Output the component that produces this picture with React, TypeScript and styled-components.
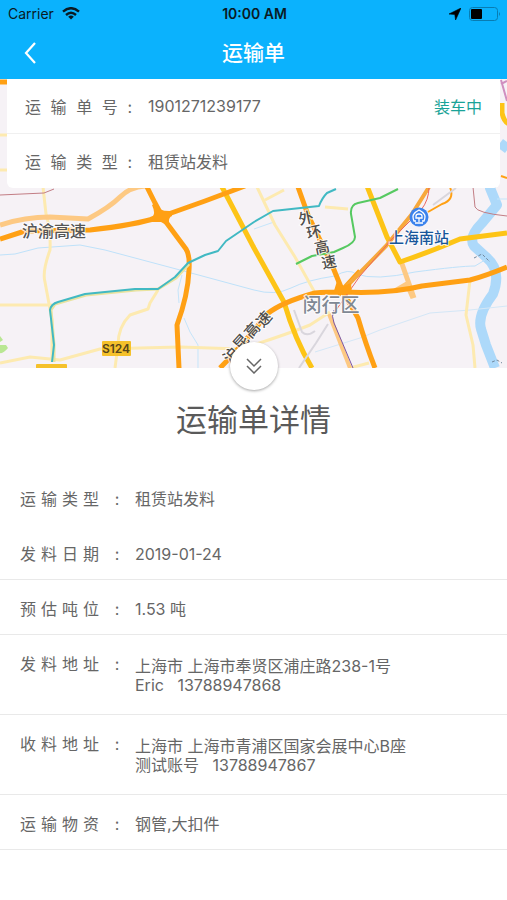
import React from "react";
import styled, { createGlobalStyle } from "styled-components";

const GlobalStyle = createGlobalStyle`
  *, *::before, *::after { box-sizing: border-box; }
  html, body { margin: 0; background: #fff; }
  body {
    font-family: Inter, "Noto Sans CJK SC", sans-serif;
    font-size: 16px;
    color: #666;
  }
`;

const Header = styled.header`
  background: #0bb2fd;
  color: #fff;
`;

const StatusBar = styled.div`
  display: grid;
  grid-template-columns: 1fr auto 1fr;
  align-items: center;
  height: 27px;
  padding: 0 6px 0 8px;
  color: #0a1a24;
  font-size: 14px;
`;

const StatusSide = styled.div<{ $end?: boolean }>`
  display: flex;
  align-items: center;
  gap: 8px;
  justify-content: ${(p) => (p.$end ? "flex-end" : "flex-start")};
`;

const Clock = styled.time`
  font-weight: 600;
`;

const NavBar = styled.div`
  display: grid;
  grid-template-columns: 60px 1fr 60px;
  align-items: center;
  height: 52px;
`;

const BackButton = styled.button`
  display: flex;
  align-items: center;
  height: 44px;
  padding: 0 24px;
  border: 0;
  background: none;
  color: #fff;
`;

const NavTitle = styled.h1`
  margin: 0;
  text-align: center;
  font-size: 21px;
  line-height: 52px;
  font-weight: 500;
`;

const MapArea = styled.section`
  position: relative;
  height: 289px;
  padding: 0 7px;
`;

const MapCanvas = styled.svg`
  position: absolute;
  inset: 0;
  width: 100%;
  height: 100%;
`;

const SummaryCard = styled.dl`
  position: relative;
  margin: 0;
  background: #fff;
  border-radius: 0 0 6px 6px;
`;

const SummaryRow = styled.div`
  display: flex;
  align-items: center;
  box-sizing: content-box;
  height: 54px;
  padding: 0 18px;
  & + & { border-top: 1px solid #f0f0f0; }
`;

const SummaryLabel = styled.dt`
  width: 107px;
  margin-right: 16px;
  text-align-last: justify;
`;

const SummaryValue = styled.dd`
  flex: 1;
  margin: 0;
`;

const State = styled.dd`
  margin: 0;
  color: #1aa398;
`;

const ToggleButton = styled.button`
  position: absolute;
  left: 50%;
  bottom: -22px;
  display: grid;
  place-items: center;
  width: 48px;
  height: 48px;
  margin-left: -24px;
  padding: 0;
  border: 0;
  border-radius: 50%;
  background: #fff;
  color: #666;
  box-shadow: 0 1px 3px rgba(0, 0, 0, 0.35);
`;

const SheetTitle = styled.h2`
  margin: 0;
  padding: 30px 0 28px;
  text-align: center;
  font-size: 31px;
  line-height: 44px;
  font-weight: 400;
  color: #5a5a5a;
`;

const Details = styled.dl`
  margin: 0;
`;

const DetailRow = styled.div<{ $plain?: boolean; $tall?: boolean }>`
  display: flex;
  min-height: 55px;
  padding: ${(p) => (p.$tall ? "20px 20px 19px" : "20px 20px 0")};
  border-bottom: 1px solid ${(p) => (p.$plain ? "transparent" : "#e9e9e9")};
  line-height: 19px;
`;

const DetailLabel = styled.dt`
  width: 79px;
  text-align-last: justify;
`;

const Colon = styled.span`
  width: 36px;
  text-align: center;
`;

const DetailValue = styled.dd<{ $tall?: boolean }>`
  flex: 1;
  margin: ${(p) => (p.$tall ? "2px 0 0" : "0")};
  white-space: pre-wrap;
`;

const orange = "#ffa014";
const yellow = "#fdc416";
const pale = "#fdeab0";
const peach = "#fdc983";

type Road = [string, string, number];

const roads: Road[] = [
  ["#add9fa", "M507 142L501 150M494 180L490 188L497 205L482 223Q468 237 474 246L486 257Q502 270 493 294Q477 315 481 329L486 345L495 368", 10],
  ["#bfe2fa", "M0 255L15 254L38 248L80 245L105 250L180 270L254 290Q275 296 291 288T335 276Q349 268 356 274Q375 281 415 272Q460 266 475 266L485 260", 1],
  ["#c5e5fa", "M182 275L178 290L179 303M184 318L190 332L198 345L198 368M254 229L274 222M497 199H507", 1],
  ["#d4e7f6", "M315 352L360 338L380 330L430 313L470 310L507 306", 1],
  [pale, "M0 135H12M0 170H12M43 187L46 214Q51 230 50 250Q42 272 45 282L52 320V362M0 305H52M0 363L30 357L60 360L100 349L180 347L240 349Q280 337 310 325L330 312", 3],
  [pale, "M158 290L150 303L148 309L130 315Q118 327 118 345L115 368M257 187L275 225L295 257L314 291M265 200L284 190M325 207L348 209M470 280L466 315L473 345L475 368M350 368L369 363", 3],
  [peach, "M0 225Q25 217 50 217L88 219Q110 207 120 197T145 186M395 291L407 284L413 298M401 261L414 298", 5],
  [peach, "M329 314L350 368", 4],
  [yellow, "M221 185L254 248L284 302Q295 340 312 368M367 186L387 237L400 262Q430 252 460 239L507 233M502 103V113Q504 122 509 124", 5],
  [orange, "M0 82H7M0 239L25 231L90 230Q135 225 160 217L205 201L245 186M147 187L155 203L163 218L186 249Q190 255 189 270Q188 295 177 325L179 368", 5],
  [orange, "M220 368Q242 346 267 314Q282 302 315 293Q325 292 343 292Q390 294 422 286L470 280Q485 276 507 267M298 187L308 215L332 265L343 292L358 318Q366 345 375 368M338 295L360 271", 5],
  ["#f7a83b", "M343 290L386 246L412 214L429 187", 4],
  [orange, "M450 187Q455 200 442 204L428 212M501 176L507 178", 2],
  ["#ea655f", "M334 313L360 276L392 239L421 210Q429 200 429 187", 1],
  ["#d9d6dd", "M299 368L316 343L328 324M294 310L302 332Q307 337 315 331M433 205L456 188", 2],
  ["#7b56a5", "M334 310Q331 316 334 323L353 368", 1],
  ["#56c961", "M398 189L380 198L358 203Q350 205 351 214L355 237Q355 243 343 248L334 252L312 256L296 264", 2],
  ["#e9e3a0", "M54 362L54 345L51 310L55 304L86 295L136 290L158 289L176 278L189 264", 3],
  ["#41b9c3", "M52 362L54 345L50 310Q51 304 58 302L85 294L135 289H158L175 277L188 263L205 255L218 251L226 241L254 222L273 211L319 206Q322 198 327 193L336 189", 2],
  ["#c27d84", "M0 195L44 193L54 189M473 187L475 207Q477 213 507 216", 1],
  ["#cf8fc0", "M501 80L507 101M501 84L507 81", 2],
];

type Glyph = [string, number, number, number];
const slantedGlyphs: Glyph[] = [
  ["外", 306, 218, -12],
  ["环", 314, 232, -12],
  ["高", 322, 247, -12],
  ["速", 329, 262, -12],
  ["沪", 231, 355, -48],
  ["昆", 241, 342, -48],
  ["高", 252, 330, -48],
  ["速", 264, 319, -48],
];

const MapLabel = styled.text<{ $size: number; $fill: string; $weight?: number }>`
  font-size: ${(p) => p.$size}px;
  font-weight: ${(p) => p.$weight ?? 500};
  fill: ${(p) => p.$fill};
  stroke: rgba(255, 255, 255, 0.8);
  stroke-width: 2px;
  paint-order: stroke;
  text-anchor: middle;
  dominant-baseline: central;
`;

const ShieldLabel = styled.text`
  font-size: 12px;
  font-weight: 600;
  fill: #57451b;
  text-anchor: middle;
`;

function CityMap() {
  return (
    <MapCanvas viewBox="0 79 507 289" preserveAspectRatio="xMidYMin slice" role="img" aria-label="地图">
      <rect x="0" y="79" width="507" height="289" fill="#f6f2f6" />
      <path d="M0 336L3 340L0 342ZM0 345H6L8 348Q3 354 0 353Z" fill="#b9e793" />
      {roads.map(([stroke, d, width]) => (
        <path key={d} d={d} stroke={stroke} strokeWidth={width} fill="none" strokeLinejoin="round" />
      ))}
      <path d="M154 204Q159 212 172 211V216Q167 218 170 227L161 222L150 222V217Q157 216 152 205ZM333 294L337 281L343 286L351 283L352 294Z" fill={orange} />
      <path d="M474 258L482 254L490 262M492 362L497 360L502 363" stroke="#71879b" strokeDasharray="3 2" fill="none" />
      <MapLabel $size={16} $fill="#555" x="54" y="231">沪渝高速</MapLabel>
      {slantedGlyphs.map(([char, x, y, angle]) => (
        <MapLabel key={`${x}-${y}`} $size={15} $fill="#4c4c4c" x={x} y={y} transform={`rotate(${angle} ${x} ${y})`}>
          {char}
        </MapLabel>
      ))}
      <MapLabel $size={19} $fill="#7f8894" x="331" y="305">闵行区</MapLabel>
      <MapLabel $size={15} $fill="#17569b" x="419" y="237">上海南站</MapLabel>
      <circle cx="419" cy="217" r="9.5" fill="#3c83ed" />
      <path d="M416 221H414Q412 216 414 214Q415 212 419 210Q423 212 424 214Q426 216 424 221H422M416 218V216Q416 214 419 214T422 216V218ZM419 218V222M415 223H423" stroke="#fff" strokeWidth="1.3" fill="none" />
      <rect x="102" y="341" width="29" height="15" rx="1" fill="#f5c12b" />
      <ShieldLabel x="116" y="353">S124</ShieldLabel>
      <rect x="36" y="364" width="31" height="15" rx="1" fill="#f5c12b" />
    </MapCanvas>
  );
}

const WifiIcon = () => (
  <svg width="18" height="13" viewBox="0 0 18 13" fill="none" stroke="currentColor" strokeWidth="2.4" aria-hidden="true">
    <path d="M1 4.6Q9-2.2 17 4.6M4 8Q9 3.6 14 8" />
    <path d="M9 12.5L6.2 9.7Q9 7.4 11.8 9.7Z" fill="currentColor" stroke="none" />
  </svg>
);

const LocationIcon = () => (
  <svg width="12" height="12" viewBox="0 0 12 12" aria-hidden="true">
    <path d="M12 0L0 6L5.8 6.4L6.6 12Z" fill="#000" stroke="#000" strokeWidth="0.6" strokeLinejoin="round" />
  </svg>
);

const BatteryIcon = () => (
  <svg width="32" height="14" viewBox="0 0 32 14" aria-hidden="true">
    <rect x="0.5" y="0.5" width="28" height="13" rx="3" fill="none" stroke="#087cb2" />
    <rect x="2" y="2" width="11" height="10" rx="1" fill="#000" />
    <path d="M30 5Q32 7 30 9Z" fill="#087cb2" />
  </svg>
);

type Item = { label: string; value: string; plain?: boolean; tall?: boolean };

const items: Item[] = [
  { label: "运 输 类 型", value: "租赁站发料", plain: true },
  { label: "发 料 日 期", value: "2019-01-24" },
  { label: "预 估 吨 位", value: "1.53 吨" },
  { label: "发 料 地 址", value: "上海市 上海市奉贤区浦庄路238-1号\nEric   13788947868", tall: true },
  { label: "收 料 地 址", value: "上海市 上海市青浦区国家会展中心B座\n测试账号   13788947867", tall: true },
  { label: "运 输 物 资", value: "钢管,大扣件" },
];

export default function App() {
  return (
    <>
      <GlobalStyle />
      <Header>
        <StatusBar>
          <StatusSide>
            <span>Carrier</span>
            <WifiIcon />
          </StatusSide>
          <Clock>10:00 AM</Clock>
          <StatusSide $end>
            <LocationIcon />
            <BatteryIcon />
          </StatusSide>
        </StatusBar>
        <NavBar>
          <BackButton type="button" aria-label="返回">
            <svg width="12" height="22" viewBox="0 0 12 22" fill="none" stroke="currentColor" strokeWidth="2.2" aria-hidden="true">
              <path d="M11 1L2 11L11 21" />
            </svg>
          </BackButton>
          <NavTitle>运输单</NavTitle>
        </NavBar>
      </Header>
      <main>
        <MapArea>
          <CityMap />
          <SummaryCard>
            <SummaryRow>
              <SummaryLabel>运 输 单 号 :</SummaryLabel>
              <SummaryValue>1901271239177</SummaryValue>
              <State>装车中</State>
            </SummaryRow>
            <SummaryRow>
              <SummaryLabel>运 输 类 型 :</SummaryLabel>
              <SummaryValue>租赁站发料</SummaryValue>
            </SummaryRow>
          </SummaryCard>
          <ToggleButton type="button" aria-label="收起详情">
            <svg width="16" height="16" viewBox="0 0 16 16" fill="none" stroke="currentColor" strokeWidth="1.5" aria-hidden="true">
              <path d="M1 1L8 8L15 1M1 8L8 15L15 8" />
            </svg>
          </ToggleButton>
        </MapArea>
        <SheetTitle>运输单详情</SheetTitle>
        <Details>
          {items.map(({ label, value, plain, tall }) => (
            <DetailRow key={label} $plain={plain} $tall={tall}>
              <DetailLabel>{label}</DetailLabel>
              <Colon>:</Colon>
              <DetailValue $tall={tall}>{value}</DetailValue>
            </DetailRow>
          ))}
        </Details>
      </main>
    </>
  );
}
